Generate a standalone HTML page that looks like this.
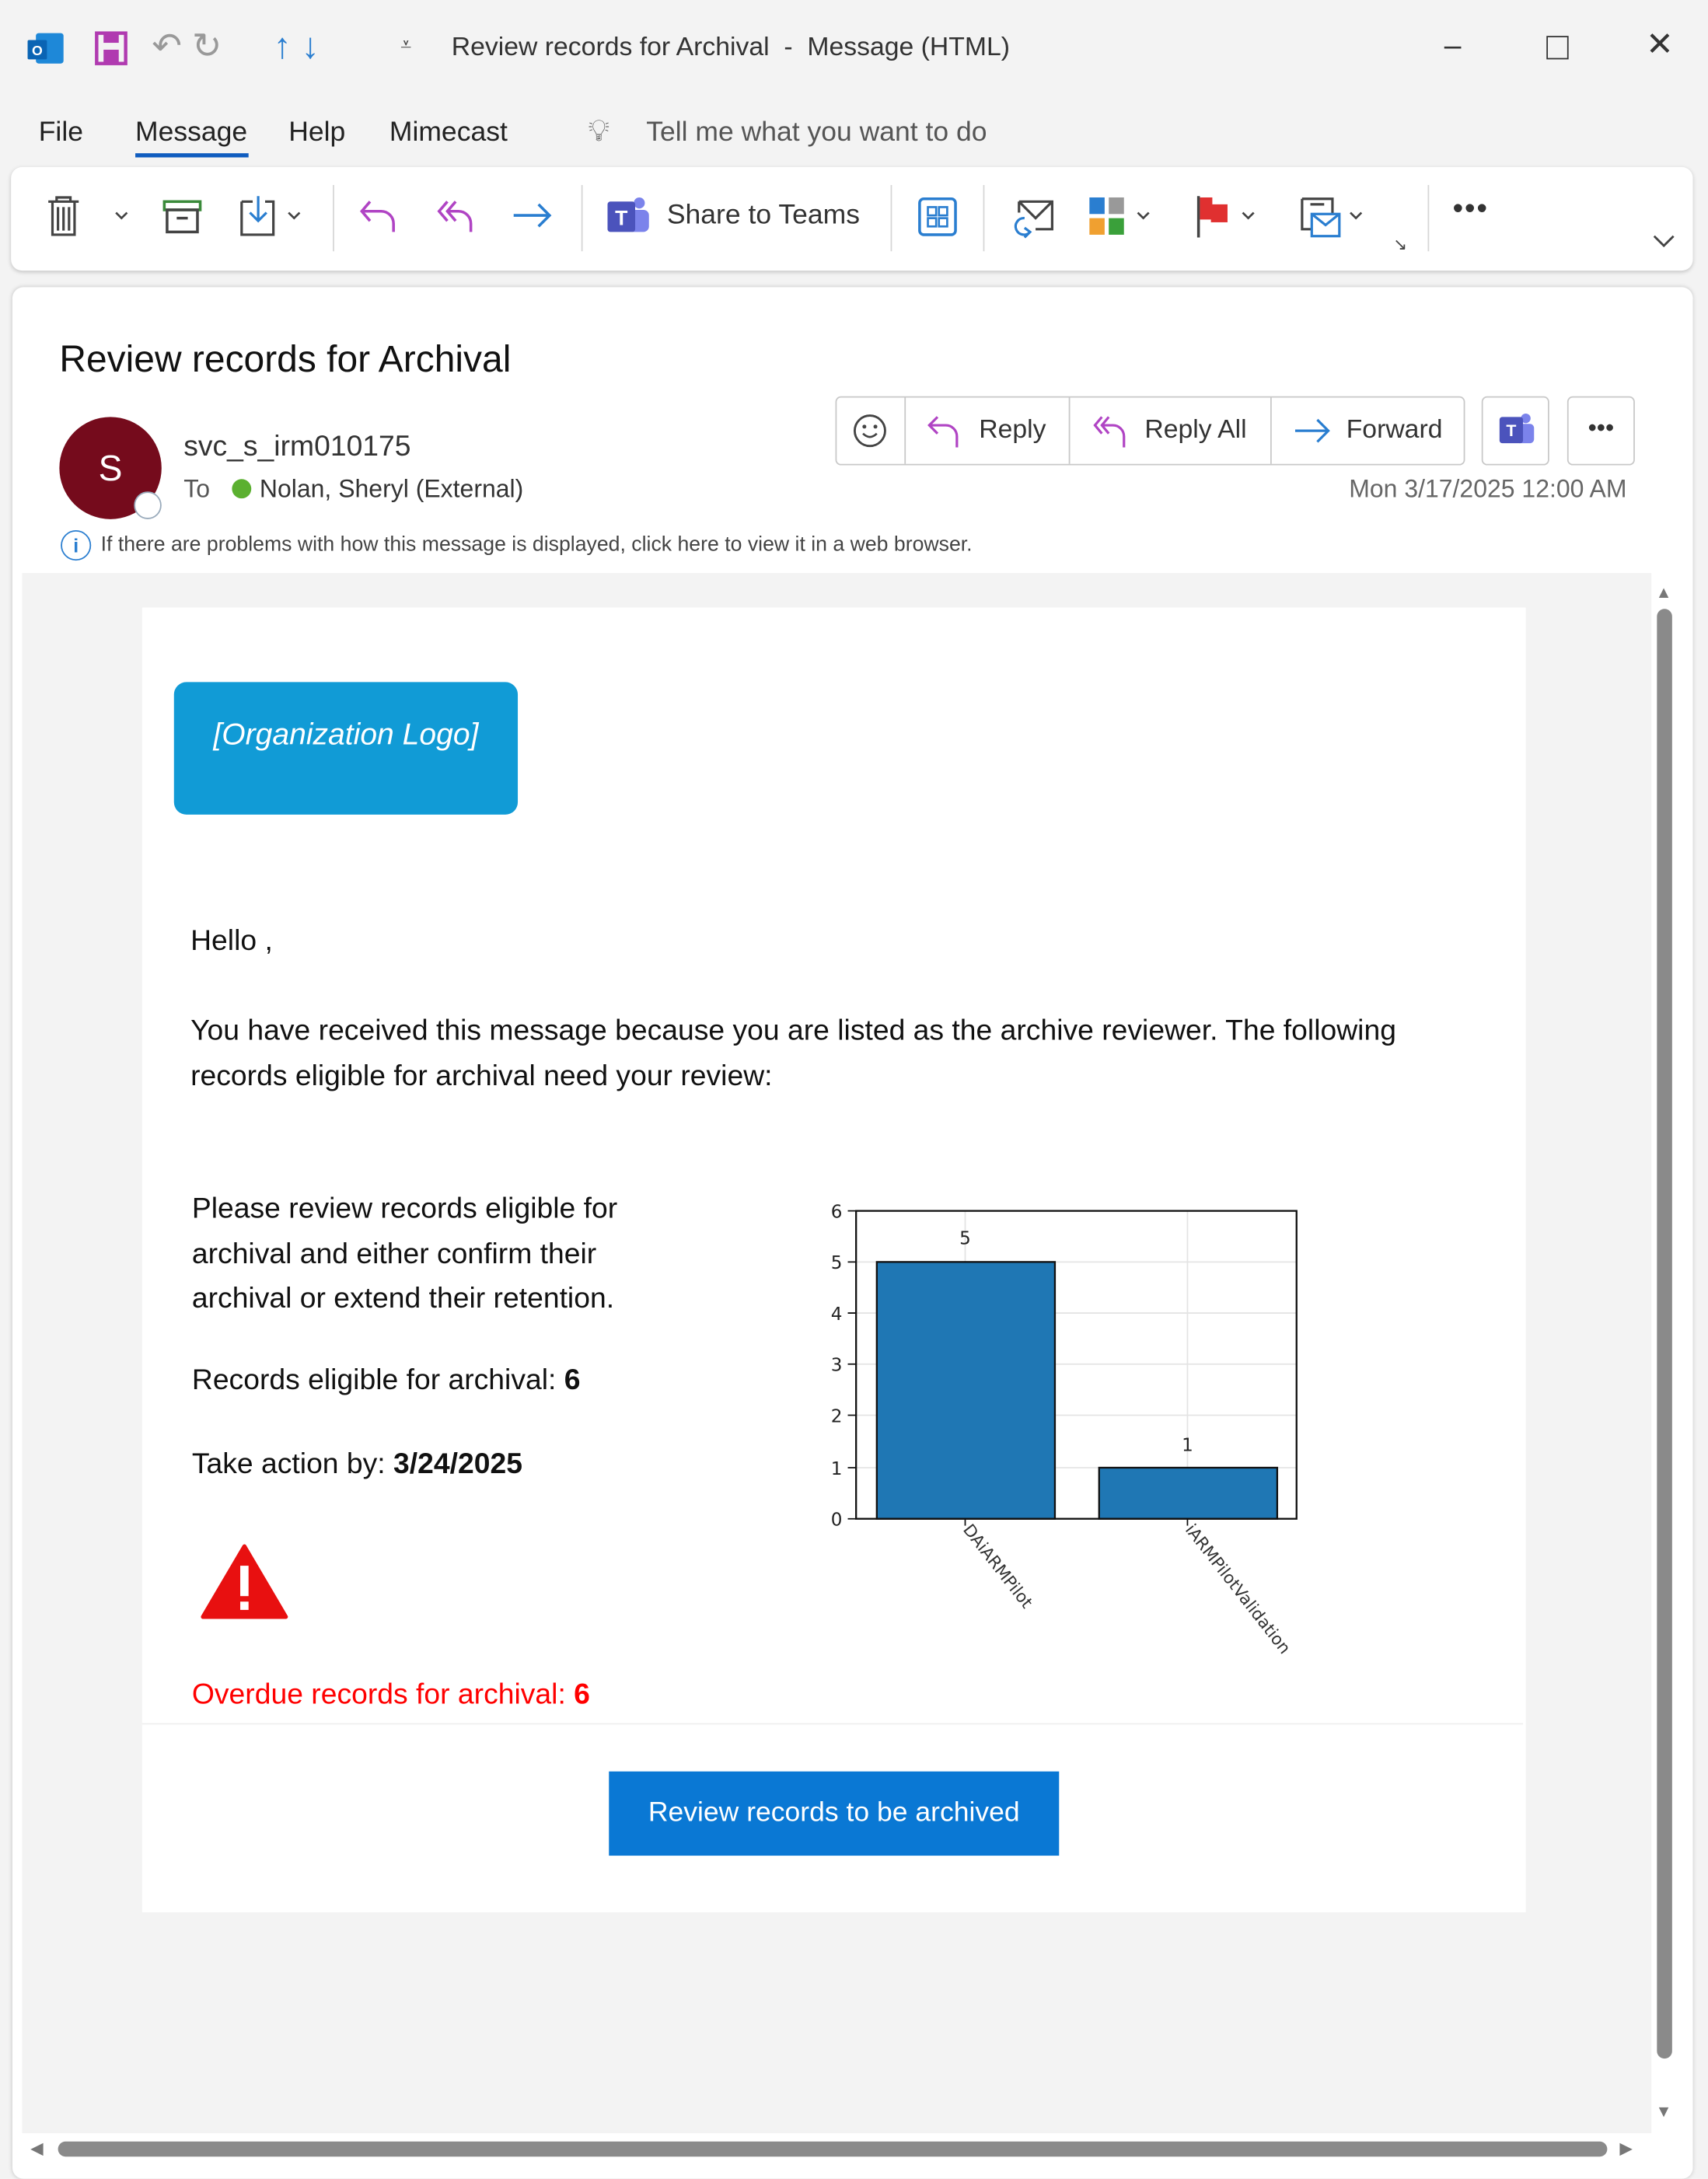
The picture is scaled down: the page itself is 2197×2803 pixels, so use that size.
<!DOCTYPE html>
<html><head><meta charset="utf-8"><style>
html,body{margin:0;padding:0;background:#f3f3f3;overflow:hidden}
body{width:2197px;height:2785px}
#w{position:absolute;left:0;top:0;width:1237px;height:1568px;transform:scale(1.7761);transform-origin:0 0;font-family:"Liberation Sans",sans-serif;color:#222}
.a{position:absolute;white-space:nowrap}
.sep{position:absolute;width:1px;background:#d6d6d6}
</style></head><body><div id="w">
<svg class="a" style="left:18px;top:22px" width="30" height="28"><rect x="8" y="2" width="20" height="22" rx="2" fill="#1e88d8"/><rect x="2" y="7" width="14" height="14" rx="1" fill="#0a64b4"/><text x="9" y="18" font-size="10" fill="#fff" text-anchor="middle" font-family="Liberation Sans" font-weight="bold">O</text></svg>
<svg class="a" style="left:68px;top:22px" width="26" height="26"><rect x="2" y="2" width="21" height="22" fill="none" stroke="#b03ab0" stroke-width="2.5"/><rect x="7" y="3" width="11" height="6" fill="#b03ab0"/><rect x="7" y="14" width="11" height="9" fill="#b03ab0"/></svg>
<div class="a" style="left:110px;top:18px;font-size:26px;color:#999">↶ ↻</div>
<div class="a" style="left:198px;top:18px;font-size:26px;color:#2a7ed0">↑ ↓</div>
<div class="a" style="left:290px;top:24px;font-size:14px;color:#444">⩡</div>
<div class="a" style="left:327px;top:24px;font-size:19px;color:#333">Review records for Archival &nbsp;- &nbsp;Message (HTML)</div>
<div class="a" style="left:1046px;top:20px;font-size:22px;color:#333">–</div>
<div class="a" style="left:1120px;top:26px;width:14px;height:15px;border:1.5px solid #333"></div>
<div class="a" style="left:1192px;top:18px;font-size:24px;color:#333">✕</div>
<div class="a" style="left:28px;top:85px;font-size:20px">File</div>
<div class="a" style="left:98px;top:85px;font-size:20px">Message</div>
<div class="a" style="left:98px;top:111px;width:82px;height:3px;background:#0f5cbf"></div>
<div class="a" style="left:209px;top:85px;font-size:20px">Help</div>
<div class="a" style="left:282px;top:85px;font-size:20px">Mimecast</div>
<div class="a" style="left:426px;top:82px;font-size:22px;color:#444">💡︎</div>
<div class="a" style="left:468px;top:85px;font-size:20px;color:#555">Tell me what you want to do</div>
<div class="a" style="left:8px;top:121px;width:1218px;height:75px;background:#fff;border-radius:8px;box-shadow:0 1px 3px rgba(0,0,0,.2)"></div>
<svg class="a" style="left:30px;top:140px" width="70" height="34"><path d="M5 6h22M11 6V3h10v3M8 6v24h16V6M12 10v17M16 10v17M20 10v17" stroke="#444" fill="none" stroke-width="1.8"/><path d="M54 14l4 4 4-4" stroke="#444" fill="none" stroke-width="1.5"/></svg>
<svg class="a" style="left:116px;top:142px" width="34" height="30"><rect x="3" y="4" width="26" height="6" fill="none" stroke="#3a8a3a" stroke-width="2"/><rect x="5" y="10" width="22" height="16" fill="none" stroke="#444" stroke-width="2"/><path d="M12 16h8" stroke="#444" stroke-width="2"/></svg>
<svg class="a" style="left:172px;top:140px" width="52" height="34"><path d="M3 6h8M20 6h6v24H3V6" fill="none" stroke="#444" stroke-width="1.8"/><path d="M15 2v18M9 14l6 6 6-6" fill="none" stroke="#2a7ed0" stroke-width="1.8"/><path d="M37 14l4 4 4-4" stroke="#444" fill="none" stroke-width="1.5"/></svg>
<div class="sep" style="left:241px;top:134px;height:48px"></div>
<svg class="a" style="left:258px;top:138px" width="150" height="36"><path d="M10 8L4 15l6 7M4 15h14a9 9 0 0 1 9 9v6" fill="none" stroke="#b044c4" stroke-width="2"/><path d="M66 8l-6 7 6 7M72 8l-6 7 6 7M66 15h8a9 9 0 0 1 9 9v6" fill="none" stroke="#b044c4" stroke-width="2"/><path d="M114 18h26M132 10l8 8-8 8" fill="none" stroke="#2a7ed0" stroke-width="2"/></svg>
<div class="sep" style="left:421px;top:134px;height:48px"></div>
<svg class="a" style="left:437px;top:140px" width="36" height="34"><circle cx="26" cy="7" r="4" fill="#7b83eb"/><rect x="18" y="12" width="15" height="16" rx="4" fill="#7b83eb"/><rect x="3" y="6" width="20" height="22" rx="2" fill="#4b53bc"/><text x="13" y="23" font-size="15" fill="#fff" text-anchor="middle" font-weight="bold" font-family="Liberation Sans">T</text></svg>
<div class="a" style="left:483px;top:145px;font-size:20px;color:#333">Share to Teams</div>
<div class="sep" style="left:645px;top:134px;height:48px"></div>
<svg class="a" style="left:664px;top:142px" width="30" height="30"><rect x="2" y="2" width="26" height="26" rx="3" fill="none" stroke="#2a7ed0" stroke-width="2"/><rect x="8" y="8" width="6" height="6" fill="none" stroke="#2a7ed0" stroke-width="1.5"/><rect x="16" y="8" width="6" height="6" fill="none" stroke="#2a7ed0" stroke-width="1.5"/><rect x="8" y="16" width="6" height="6" fill="none" stroke="#2a7ed0" stroke-width="1.5"/><rect x="16" y="16" width="6" height="6" fill="none" stroke="#2a7ed0" stroke-width="1.5"/></svg>
<div class="sep" style="left:712px;top:134px;height:48px"></div>
<svg class="a" style="left:730px;top:142px" width="36" height="34"><path d="M8 4h24v20H20M8 4l12 12 12-12M8 4v8" fill="none" stroke="#444" stroke-width="1.8"/><path d="M12 16a6 6 0 1 0 4 10M12 30l4-4-4-3" fill="none" stroke="#2a7ed0" stroke-width="1.8"/></svg>
<svg class="a" style="left:786px;top:140px" width="50" height="34"><rect x="3" y="3" width="11" height="12" fill="#2a7ed0"/><rect x="17" y="3" width="11" height="12" fill="#999"/><rect x="3" y="18" width="11" height="12" fill="#f0a030"/><rect x="17" y="18" width="11" height="12" fill="#3aa03a"/><path d="M38 14l4 4 4-4" stroke="#444" fill="none" stroke-width="1.5"/></svg>
<svg class="a" style="left:864px;top:140px" width="50" height="34"><path d="M4 2v30" stroke="#444" stroke-width="2"/><rect x="5" y="3" width="9" height="16" fill="#e03030"/><rect x="13" y="8" width="12" height="13" fill="#e03030"/><path d="M36 14l4 4 4-4" stroke="#444" fill="none" stroke-width="1.5"/></svg>
<svg class="a" style="left:940px;top:140px" width="52" height="36"><path d="M3 4h22v14M3 4v22h8M9 8h10" fill="none" stroke="#444" stroke-width="1.8"/><rect x="10" y="15" width="20" height="16" fill="#fff" stroke="#2a7ed0" stroke-width="1.8"/><path d="M10 15l10 8 10-8" fill="none" stroke="#2a7ed0" stroke-width="1.8"/><path d="M38 14l4 4 4-4" stroke="#444" fill="none" stroke-width="1.5"/></svg>
<div class="a" style="left:1009px;top:170px;font-size:12px;color:#444">↘</div>
<div class="sep" style="left:1034px;top:134px;height:48px"></div>
<div class="a" style="left:1052px;top:138px;font-size:22px;color:#333;letter-spacing:1px">•••</div>
<svg class="a" style="left:1195px;top:168px" width="20" height="14"><path d="M3 3l7 7 7-7" fill="none" stroke="#444" stroke-width="1.6"/></svg>
<div class="a" style="left:9px;top:208px;width:1217px;height:1370px;background:#fff;border-radius:8px;box-shadow:0 0 3px rgba(0,0,0,.18)"></div>
<div class="a" style="left:43px;top:245px;font-size:27px;color:#111">Review records for Archival</div>
<div class="a" style="left:43px;top:302px;width:74px;height:74px;border-radius:50%;background:#750b1c;color:#fff;font-size:26px;text-align:center;line-height:74px">S</div>
<div class="a" style="left:97px;top:356px;width:18px;height:18px;border-radius:50%;background:#fff;border:1.5px solid #9ab"></div>
<div class="a" style="left:133px;top:312px;font-size:21px;color:#333">svc_s_irm010175</div>
<div class="a" style="left:133px;top:344px;font-size:18px;color:#555">To</div>
<div class="a" style="left:168px;top:347px;width:14px;height:14px;border-radius:50%;background:#5bb030"></div>
<div class="a" style="left:188px;top:344px;font-size:18px;color:#333">Nolan, Sheryl (External)</div>
<div class="a" style="left:605px;top:287px;width:454px;height:48px;border:1px solid #c8c8c8;border-radius:4px"></div>
<div class="sep" style="left:655px;top:288px;height:48px;background:#c8c8c8"></div>
<div class="sep" style="left:774px;top:288px;height:48px;background:#c8c8c8"></div>
<div class="sep" style="left:920px;top:288px;height:48px;background:#c8c8c8"></div>
<svg class="a" style="left:616px;top:298px" width="28" height="28"><circle cx="14" cy="14" r="11" fill="none" stroke="#444" stroke-width="1.6"/><circle cx="10" cy="11" r="1.4" fill="#444"/><circle cx="18" cy="11" r="1.4" fill="#444"/><path d="M9 16q5 5 10 0" fill="none" stroke="#444" stroke-width="1.5"/></svg>
<svg class="a" style="left:670px;top:298px" width="32" height="30"><path d="M9 4L3 10l6 6M3 10h12a8 8 0 0 1 8 8v8" fill="none" stroke="#b044c4" stroke-width="1.8"/></svg>
<div class="a" style="left:709px;top:301px;font-size:19px;color:#333">Reply</div>
<svg class="a" style="left:790px;top:298px" width="32" height="30"><path d="M8 4L3 10l5 6M13 4L8 10l5 6M8 10h8a8 8 0 0 1 8 8v8" fill="none" stroke="#b044c4" stroke-width="1.8"/></svg>
<div class="a" style="left:829px;top:301px;font-size:19px;color:#333">Reply All</div>
<svg class="a" style="left:936px;top:300px" width="30" height="24"><path d="M2 12h24M18 4l8 8-8 8" fill="none" stroke="#2a7ed0" stroke-width="1.8"/></svg>
<div class="a" style="left:975px;top:301px;font-size:19px;color:#333">Forward</div>
<div class="a" style="left:1073px;top:287px;width:47px;height:48px;border:1px solid #c8c8c8;border-radius:4px"></div>
<svg class="a" style="left:1083px;top:297px" width="30" height="28"><circle cx="22" cy="6" r="3.5" fill="#7b83eb"/><rect x="15" y="10" width="13" height="14" rx="3" fill="#7b83eb"/><rect x="3" y="5" width="17" height="19" rx="2" fill="#4b53bc"/><text x="11.5" y="19" font-size="12" fill="#fff" text-anchor="middle" font-weight="bold" font-family="Liberation Sans">T</text></svg>
<div class="a" style="left:1135px;top:287px;width:47px;height:48px;border:1px solid #c8c8c8;border-radius:4px;text-align:center;font-size:18px;line-height:44px;color:#333">•••</div>
<div class="a" style="left:977px;top:344px;font-size:18px;color:#666">Mon 3/17/2025 12:00 AM</div>
<div class="a" style="left:44px;top:384px;width:20px;height:20px;border-radius:50%;border:1.5px solid #2a7ed0;color:#2a7ed0;font-size:14px;text-align:center;line-height:20px;font-weight:bold">i</div>
<div class="a" style="left:73px;top:386px;font-size:15px;color:#444">If there are problems with how this message is displayed, click here to view it in a web browser.</div>
<div class="a" style="left:16px;top:415px;width:1180px;height:1130px;background:#f3f3f3"></div>
<div class="a" style="left:103px;top:440px;width:1002px;height:945px;background:#fff"></div>
<div class="a" style="left:126px;top:494px;width:249px;height:96px;background:#119bd6;border-radius:9px;color:#fff;font-size:22px;font-style:italic;text-align:center;line-height:76px">[Organization Logo]</div>
<div class="a" style="left:138px;top:670px;font-size:21px;color:#111">Hello ,</div>
<div class="a" style="left:138px;top:730px;font-size:21px;color:#111;line-height:33px;white-space:normal;width:900px">You have received this message because you are listed as the archive reviewer. The following records eligible for archival need your review:</div>
<div class="a" style="left:139px;top:860px;font-size:21px;color:#111;line-height:32.5px;white-space:normal;width:370px">Please review records eligible for archival and either confirm their archival or extend their retention.</div>
<div class="a" style="left:139px;top:988px;font-size:21px;color:#111">Records eligible for archival: <b>6</b></div>
<div class="a" style="left:139px;top:1049px;font-size:21px;color:#111">Take action by: <b>3/24/2025</b></div>
<svg class="a" style="left:144px;top:1117px" width="66" height="56"><path d="M33 3L63 54H3Z" fill="#e81010" stroke="#e81010" stroke-width="3" stroke-linejoin="round"/><rect x="30" y="17" width="6" height="22" fill="#fff"/><rect x="30" y="43" width="6" height="6" fill="#fff"/></svg>
<div class="a" style="left:139px;top:1216px;font-size:21px;color:#f00">Overdue records for archival: <b>6</b></div>
<div class="a" style="left:103px;top:1248px;width:1000px;height:1px;background:#eee"></div>
<div class="a" style="left:441px;top:1283px;width:326px;height:61px;background:#0a78d4;color:#fff;font-size:20px;text-align:center;line-height:61px">Review records to be archived</div>
<svg class="a" style="left:590px;top:860px" width="380" height="360" font-family="DejaVu Sans,sans-serif">
<g stroke="#e4e4e4" stroke-width="1"><line x1="30" y1="54" x2="349" y2="54"/><line x1="30" y1="91" x2="349" y2="91"/><line x1="30" y1="128" x2="349" y2="128"/><line x1="30" y1="165" x2="349" y2="165"/><line x1="30" y1="203" x2="349" y2="203"/><line x1="109" y1="17" x2="109" y2="240"/><line x1="270" y1="17" x2="270" y2="240"/></g>
<rect x="45" y="54" width="129" height="186" fill="#1f77b4" stroke="#111" stroke-width="1.3"/>
<rect x="206" y="203" width="129" height="37" fill="#1f77b4" stroke="#111" stroke-width="1.3"/>
<rect x="30" y="17" width="319" height="223" fill="none" stroke="#111" stroke-width="1.3"/>
<g font-size="13" fill="#222" text-anchor="end"><text x="20" y="245">0</text><text x="20" y="208">1</text><text x="20" y="170">2</text><text x="20" y="133">3</text><text x="20" y="96">4</text><text x="20" y="59">5</text><text x="20" y="22">6</text></g>
<g stroke="#111"><line x1="24" y1="240" x2="30" y2="240"/><line x1="24" y1="203" x2="30" y2="203"/><line x1="24" y1="165" x2="30" y2="165"/><line x1="24" y1="128" x2="30" y2="128"/><line x1="24" y1="91" x2="30" y2="91"/><line x1="24" y1="54" x2="30" y2="54"/><line x1="24" y1="17" x2="30" y2="17"/><line x1="109" y1="240" x2="109" y2="245"/><line x1="270" y1="240" x2="270" y2="245"/></g>
<text x="109" y="41" font-size="13" text-anchor="middle" fill="#222">5</text>
<text x="270" y="191" font-size="13" text-anchor="middle" fill="#222">1</text>
<text transform="translate(107,248) rotate(52)" font-size="12" fill="#333">DAiARMPilot</text>
<text transform="translate(268,248) rotate(52)" font-size="12" fill="#333">iARMPilotValidation</text>
</svg>
<div class="a" style="left:1199px;top:422px;font-size:12px;color:#777">▲</div>
<div class="a" style="left:1200px;top:441px;width:11px;height:1050px;background:#8a8a8a;border-radius:6px"></div>
<div class="a" style="left:1199px;top:1522px;font-size:12px;color:#777">▼</div>
<div class="a" style="left:22px;top:1549px;font-size:12px;color:#777">◀</div>
<div class="a" style="left:42px;top:1551px;width:1122px;height:11px;background:#8a8a8a;border-radius:6px"></div>
<div class="a" style="left:1173px;top:1549px;font-size:12px;color:#777">▶</div>
</div></body></html>
